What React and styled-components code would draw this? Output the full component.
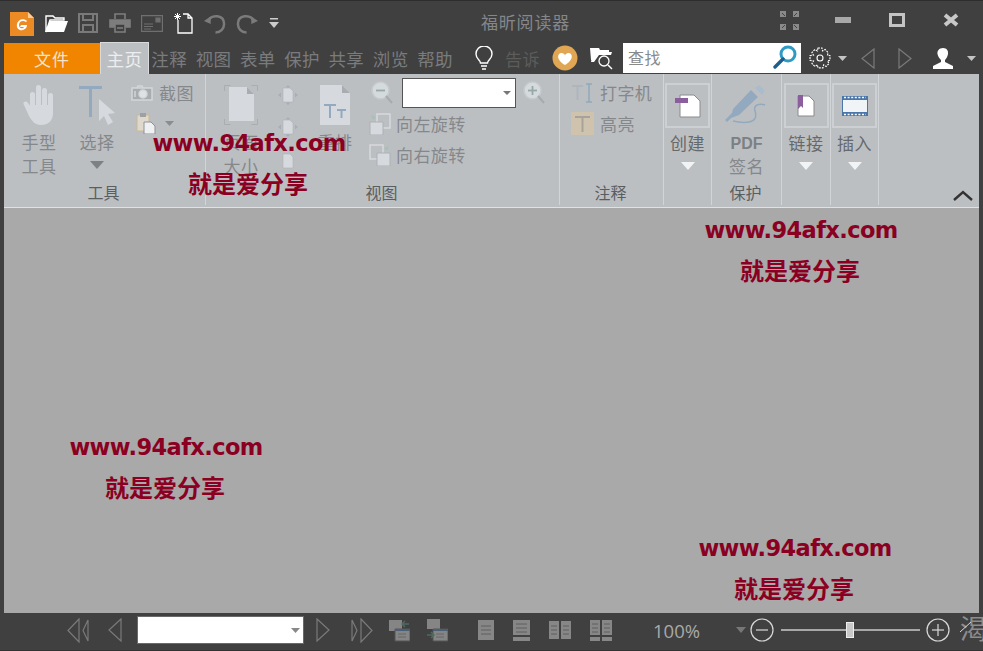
import React from 'react';
import styled, { createGlobalStyle } from 'styled-components';

// --- palette ---
const colors = {
  chrome: '#404040',
  ribbon: '#bcbfc2',
  canvas: '#a9a9a9',
  orange: '#f28500',
  disabled: '#85888b',
  label: '#5b5e61',
  tab: '#797b7d',
  sheet: '#d6dade',
  blue: '#92a9bf',
  water: '#8b0022',
};

const cjk = '"Liberation Sans", "Noto Sans CJK SC", sans-serif';

const GlobalStyle = createGlobalStyle`
  html, body { margin: 0; padding: 0; background: ${colors.chrome}; }
  * { box-sizing: border-box; }
`;

const Window = styled.div`
  position: relative;
  width: 983px;
  height: 651px;
  overflow: hidden;
  display: flex;
  flex-direction: column;
  background: ${colors.chrome};
  border-top: 1px solid #2e2e2e;
  font-family: ${cjk};
`;

// --- title bar ---
const TitleBar = styled.div`
  height: 41px;
  flex: none;
  display: flex;
  align-items: center;
  padding: 3px 0 0 10px;
`;
const QuickTools = styled.div`
  width: 471px;
  flex: none;
  display: flex;
  align-items: center;
  gap: 10.6px;
`;
const Title = styled.div`
  width: 281px;
  flex: none;
  font-size: 17px;
  line-height: 24px;
  color: #85878a;
  letter-spacing: 0.8px;
  margin-top: 2px;
`;
const WinControls = styled.div`
  display: flex;
  flex: none;
  align-items: center;
  margin-top: -6px;
`;
const WinSlot = styled.div`
  width: 54px;
  display: flex;
  justify-content: center;
`;

// --- tab row ---
const TabRow = styled.div`
  height: 32px;
  flex: none;
  display: flex;
  align-items: stretch;
  padding: 0 4px;
`;
const FileTab = styled.div`
  width: 96px;
  flex: none;
  background: ${colors.orange};
  color: #f3e3cf;
  font-size: 17px;
  display: flex;
  align-items: center;
  justify-content: center;
  letter-spacing: 1px;
  margin-top: 1px;
`;
const HomeTab = styled.div`
  width: 49px;
  flex: none;
  background: ${colors.ribbon};
  border: 1px solid #d8dadc;
  border-bottom: none;
  color: #eceef0;
  font-size: 17.5px;
  display: flex;
  align-items: center;
  justify-content: center;
  letter-spacing: 0.5px;
`;
const TabList = styled.div`
  display: flex;
  flex: none;
  margin-left: -2px;
`;
const Tab = styled.div`
  width: 44.3px;
  flex: none;
  color: ${colors.tab};
  font-size: 17.5px;
  letter-spacing: 0.3px;
  display: flex;
  align-items: center;
  justify-content: center;
`;
const TellGroup = styled.div`
  display: flex;
  flex: none;
  align-items: center;
  margin-left: 18px;
  gap: 12px;
  width: 148px;
`;
const TellText = styled.span`
  color: #5c5c5c;
  font-size: 17px;
  letter-spacing: 0.5px;
`;
const SearchBox = styled.div`
  width: 178px;
  flex: none;
  height: 30px;
  margin-top: 1px;
  background: #fff;
  display: flex;
  align-items: center;
  justify-content: space-between;
  padding: 0 3px 3px 5px;
  color: #8a8a8a;
  font-size: 16px;
  letter-spacing: 0.5px;
`;
const TabTools = styled.div`
  display: flex;
  align-items: center;
  margin-left: 8px;
  flex: 1;
`;
const Spaced = styled.div`
  display: flex;
  flex: none;
  align-items: center;
  gap: ${(p) => p.$gap || 0}px;
  margin-left: ${(p) => p.$ml || 0}px;
`;

// --- ribbon ---
const Ribbon = styled.div`
  height: 134px;
  flex: none;
  margin: 0 4px;
  display: flex;
  position: relative;
  background: ${colors.ribbon};
  border-bottom: 1px solid #dfe1e3;
`;
const Group = styled.div`
  width: ${(p) => p.$w}px;
  flex: none;
  height: 131px;
  display: flex;
  flex-direction: column;
  border-right: 1px solid #d2d5d8;
`;
const GroupBody = styled.div`
  flex: 1;
  display: flex;
  padding-left: ${(p) => p.$pad || 0}px;
  gap: ${(p) => p.$gap || 0}px;
`;
const GroupLabel = styled.div`
  height: 23px;
  flex: none;
  padding-right: 2px;
  font-size: 16px;
  line-height: 23px;
  text-align: center;
  color: ${colors.label};
`;
const BigTool = styled.div`
  width: ${(p) => p.$w || 50}px;
  flex: none;
  display: flex;
  flex-direction: column;
  align-items: center;
  margin-left: ${(p) => p.$ml || 0}px;
  padding-top: ${(p) => (p.$boxed ? 9 : 11)}px;
`;
const IconSlot = styled.div`
  height: 40px;
  margin-bottom: 7px;
  display: flex;
  justify-content: center;
`;
const IconBox = styled.div`
  width: 45px;
  height: 45px;
  margin-bottom: 5px;
  border: 2px solid #cdd0d3;
  display: flex;
  align-items: center;
  justify-content: center;
`;
const BigLabel = styled.div`
  font-size: 17px;
  line-height: 24px;
  letter-spacing: 0.4px;
  color: ${(p) => (p.$dark ? '#66696c' : colors.disabled)};
`;
const LatinLabel = styled(BigLabel)`
  font-size: 16px;
  font-weight: 700;
  letter-spacing: 0;
  color: #7d8083;
`;
const ArrowSlot = styled.div`
  margin-top: 5px;
  line-height: 0;
`;
const SmallCol = styled.div`
  display: flex;
  flex-direction: column;
  padding-top: 3px;
  margin-left: ${(p) => p.$ml || 0}px;
`;
const SmallRow = styled.div`
  height: 31px;
  display: flex;
  align-items: center;
  gap: ${(p) => p.$gap ?? 6}px;
  font-size: 17px;
  letter-spacing: 0.4px;
  color: ${colors.disabled};
`;
const IconStack = styled.div`
  width: 22px;
  flex: none;
  margin-left: ${(p) => p.$ml}px;
  padding-top: 11px;
  display: flex;
  flex-direction: column;
  gap: 12px;
  > :last-child { margin-top: 2px; }
`;
const ZoomInput = styled.div`
  width: 114px;
  height: 30px;
  margin: 0 7px 0 9px;
  background: #fff;
  border: 1px solid #555;
  display: flex;
  align-items: center;
  justify-content: flex-end;
  padding-right: 4px;
`;
const Collapse = styled.div`
  position: absolute;
  right: 6px;
  bottom: 5px;
  line-height: 0;
`;

// --- document area ---
const Canvas = styled.div`
  flex: 1;
  margin: 0 4px;
  background: ${colors.canvas};
`;
const Watermark = styled.div`
  position: absolute;
  left: ${(p) => p.$x}px;
  top: ${(p) => p.$y}px;
  width: 200px;
  text-align: center;
  color: ${colors.water};
  font-weight: 700;
  font-family: "DejaVu Sans", "Noto Sans CJK SC", sans-serif;
  pointer-events: none;
`;
const WaterUrl = styled.div`
  font-size: 22.5px;
  line-height: 30px;
  letter-spacing: -0.6px;
`;
const WaterText = styled.div`
  font-size: 24px;
  line-height: 30px;
  margin-top: 12px;
  margin-left: -2px;
`;

// --- status bar ---
const StatusBar = styled.div`
  height: 38px;
  flex: none;
  display: flex;
  align-items: center;
  padding: 0 0 3px 67px;
  border-bottom: 1px solid #333;
`;
const PageBox = styled.div`
  width: 167px;
  flex: none;
  height: 28px;
  background: #fff;
  border: 1px solid #6a6a6a;
  margin: 0 12px 0 15px;
  display: flex;
  align-items: center;
  justify-content: flex-end;
  padding-right: 3px;
`;
const ZoomText = styled.div`
  width: 83px;
  flex: none;
  margin-left: 41px;
  color: #a9a9a9;
  font-size: 18.5px;
  font-family: "Open Sans", "Liberation Sans", sans-serif;
`;
const Slider = styled.div`
  position: relative;
  width: 139px;
  flex: none;
  height: 2px;
  margin: 0 6px 0 7px;
  background: #a8a8a8;
`;
const SliderThumb = styled.div`
  position: absolute;
  left: 65px;
  top: -7px;
  width: 8px;
  height: 16px;
  background: #c8c8c8;
  border: 1px solid #eee;
`;
const CutChar = styled.div`
  position: relative;
  flex: none;
  margin-left: 10px;
  color: #8d8d8d;
  font-size: 27px;
  line-height: 30px;
  white-space: nowrap;
`;
const GripLine = styled.svg`
  position: absolute;
  left: 0;
  top: 6px;
`;

// --- icons ---
const Caret = ({ w = 10, h = 5, c = '#b5b5b5' }) => (
  <svg width={w} height={h} viewBox="0 0 10 5" preserveAspectRatio="none"><path d="M0 0h10L5 5z" fill={c} /></svg>
);

const Logo = () => (
  <svg width="24" height="25" viewBox="0 0 24 25">
    <path d="M0 1h18l6 6v18H0z" fill="#ec8a24" />
    <path d="M18 1l6 6h-6z" fill="#f7cf9f" />
    <path d="M17 10c-3-3-9-2-10 3s3 7 6 6 4-3 4-5h-6l-1 2h4c-1 2-5 2-5-2s4-5 7-3z" fill="#fff" />
  </svg>
);
const OpenFolder = () => (
  <svg width="23" height="19" viewBox="0 0 23 19">
    <path d="M1 18V2h7l2 2h9v2H5z" fill="none" stroke="#fff" strokeWidth="1.4" />
    <path d="M0 18L5 7h18l-4 11z" fill="#fff" />
  </svg>
);
const Save = () => (
  <svg width="20" height="20" viewBox="0 0 20 20" fill="none" stroke="#7a7a7a" strokeWidth="2">
    <path d="M1 1h18v18H1z" />
    <path d="M5 1v6h10V1M5 19v-7h10v7" />
  </svg>
);
const Printer = () => (
  <svg width="22" height="20" viewBox="0 0 22 20" fill="none" stroke="#7d7d7d" strokeWidth="1.6">
    <path d="M6 6V1h10v5" />
    <path d="M5 14H1V7h20v7h-4" fill="#7d7d7d" />
    <path d="M6 11h10v8H6z" fill={colors.chrome} />
    <path d="M8 15h6" />
  </svg>
);
const Mail = () => (
  <svg width="22" height="17" viewBox="0 0 22 17" fill="none" stroke="#6f6f6f" strokeWidth="1.2">
    <path d="M.6.6h20.8v15.8H.6z" />
    <path d="M3 9h9M3 11.5h9M3 14h7" />
    <path d="M15 3h4v4h-4z" fill="#6f6f6f" />
  </svg>
);
const NewDoc = () => (
  <svg width="19" height="22" viewBox="0 0 19 22" fill="none" stroke="#fff" strokeWidth="1.3">
    <path d="M4 8v13h14V6l-4-4H9M14 2v4h4" />
    <path d="M3.5 1v7M0 4.5h7M1 2l5 5M6 2L1 7" strokeWidth="1" />
  </svg>
);
const Undo = ({ flip }) => (
  <svg width="22" height="21" viewBox="0 0 23 21" fill="none" stroke="#7b7b7b" strokeWidth="2.6" style={flip ? { transform: 'scaleX(-1)' } : undefined}>
    <path d="M5 7c3-6 16-6 16 4 0 5-4 9-9 9" />
    <path d="M0 8l7-5v8z" fill="#7b7b7b" stroke="none" />
  </svg>
);
const QuickCaret = () => (
  <svg width="10" height="12" viewBox="0 0 10 12">
    <path d="M1 1h8v1.5H1z" fill="#ccc" /><path d="M0 5h10L5 11z" fill="#ccc" />
  </svg>
);
const FullScreen = () => (
  <svg width="19" height="19" viewBox="0 0 19 19" fill="#8a8a8a">
    <path d="M0 0h6v6H0zM13 0h6v6h-6zM0 13h6v6H0zM13 13h6v6h-6z" />
    <path d="M2 2l3 3M17 2l-3 3M2 17l3-3M17 17l-3-3" stroke="#444" />
  </svg>
);
const Minimize = () => <svg width="16" height="6" viewBox="0 0 16 6"><path d="M0 0h16v6H0z" fill="#a8a8a8" /></svg>;
const Maximize = () => (
  <svg width="16" height="14" viewBox="0 0 16 14"><path d="M1.5 1.5h13v11h-13z" fill="none" stroke="#c4c4c4" strokeWidth="3" /></svg>
);
const CloseX = () => (
  <svg width="16" height="14" viewBox="0 0 16 14"><path d="M2 2l12 10M14 2L2 12" stroke="#c8c8c8" strokeWidth="4" /></svg>
);
const Bulb = () => (
  <svg width="18" height="24" viewBox="0 0 18 24" fill="none" stroke="#fff" strokeWidth="1.4">
    <path d="M5.5 17c0-3-4.500-4-4.500-9a8 8 0 0 1 16 0c0 5-4.500 6-4.500 9z" />
    <path d="M6 20h6M7 23h4" />
  </svg>
);
const HeartBadge = () => (
  <svg width="26" height="26" viewBox="0 0 26 26">
    <circle cx="13" cy="13" r="12.500" fill="#e0a654" />
    <path d="M13 20c-10-6-7-12-3.500-12 2 0 3.500 2 3.500 2s1.500-2 3.500-2c3.500 0 6.500 6-3.500 12z" fill="#fff" />
  </svg>
);
const FolderSearch = () => (
  <svg width="23" height="24" viewBox="0 0 23 24" fill="none">
    <path d="M0 2h9l1 2h9v2H5l-3 8-1 0z" fill="#fff" />
    <path d="M3 6h19l-1 3H9l-5 7H1z" fill="#fff" />
    <circle cx="14" cy="15" r="5" stroke="#fff" strokeWidth="1.3" fill={colors.chrome} />
    <path d="M18 19l4 4" stroke="#fff" strokeWidth="1.4" />
  </svg>
);
const Magnifier = () => (
  <svg width="25" height="24" viewBox="0 0 25 24" fill="none">
    <circle cx="15" cy="9" r="7" stroke="#2f9bc4" strokeWidth="3" />
    <path d="M10 14l-8 8" stroke="#1d5e8c" strokeWidth="3.400" strokeLinecap="round" />
  </svg>
);
const Gear = () => (
  <svg width="22" height="22" viewBox="0 0 22 22" fill="none" stroke="#fff" strokeWidth="1.1">
    <circle cx="11" cy="11" r="3" />
    <path d="M9 1h4l.6 3 2.500-1.500 3 3L18.500 8l2.500.7v4.600l-2.500.7 1.600 2.500-3 3-2.500-1.600-.6 3H9l-.6-3-2.500 1.600-3-3L4.500 14 1 13.300V8.700L4.500 8 2.900 5.500l3-3L8.400 4z" strokeDasharray="2 1" />
  </svg>
);
const Tri = ({ dir = 'left', w = 15, h = 22, c = '#7a7a7a' }) => (
  <svg width={w} height={h} viewBox={`0 0 ${w} ${h}`}>
    <path d={dir === 'left' ? `M${w - 1} 1L1 ${h / 2}L${w - 1} ${h - 1}z` : `M1 1L${w - 1} ${h / 2}L1 ${h - 1}z`} fill="none" stroke={c} strokeWidth="1.2" />
  </svg>
);
const DoubleTri = ({ dir }) => (
  <svg width="23" height="25" viewBox="0 0 23 25" fill="none" stroke="#7a7a7a" strokeWidth="1.2" style={dir === 'right' ? { transform: 'scaleX(-1)' } : undefined}>
    <path d="M12 1L1 12.500 12 24zM21 2L16 12.500 21 23z" />
  </svg>
);
const User = () => (
  <svg width="22" height="21" viewBox="0 0 22 21">
    <path d="M11 0c4 0 5.500 3 5 6s-2 5-3 6v2l8 4v3H1v-3l8-4v-2C8 11 6 9 5.500 6S7 0 11 0z" fill="#fff" />
  </svg>
);
const Hand = () => (
  <svg width="32" height="40" viewBox="0 0 32 40" fill={colors.sheet}>
    <rect x="7" y="7" width="5" height="22" rx="2.500" />
    <rect x="13" y="0" width="5" height="28" rx="2.500" />
    <rect x="19" y="3" width="5" height="26" rx="2.500" />
    <rect x="25" y="8" width="5" height="22" rx="2.500" />
    <path d="M7 20h23v8c0 8-5 12-12 12-6 0-9-4-12-9L1 20c-2-3 2-5 4-2l3 4z" />
  </svg>
);
const SelectIcon = () => (
  <svg width="37" height="40" viewBox="0 0 37 40">
    <path d="M0 1h23v3h-10v28h-3V4H0z" fill={colors.blue} />
    <path d="M20 14l16 14-7 1 5 8-5 3-4-9-5 5z" fill={colors.sheet} />
  </svg>
);
const Camera = () => (
  <svg width="22" height="16" viewBox="0 0 22 16" fill="none" stroke="#d3d6d9" strokeWidth="1.5">
    <path d="M1 3h20v12H1z" fill="#a9acaf" />
    <circle cx="12" cy="9" r="4" fill="#dfe2e4" />
    <path d="M4 6v6" />
    <path d="M6 3l1-2h4l1 2" />
  </svg>
);
const Paste = () => (
  <svg width="20" height="21" viewBox="0 0 20 21">
    <path d="M1 2h12v16H1z" fill="#dfd9cd" stroke="#cdb893" />
    <path d="M4 0h6v4H4z" fill="#9ea1a4" />
    <path d="M8 9h7l4 4v8H8z" fill="#eef0f1" stroke="#8f9295" />
  </svg>
);
const PageIcon = () => (
  <svg width="34" height="40" viewBox="0 0 34 40" fill="none">
    <path d="M.5 6V.5h6M27.500.5h6v5.500M.5 34v5.500h6M27.500 39.500h6V34" stroke="#a9adb0" />
    <path d="M5 2h18l7 7v27H5z" fill={colors.sheet} />
    <path d="M23 2l7 7h-7z" fill="#a9adb1" />
  </svg>
);
const MiniPage = ({ arrows }) => (
  <svg width="22" height="20" viewBox="0 0 22 20" fill="none">
    <path d="M6 3h7l3 3v11H6z" fill={colors.sheet} stroke="#aeb2b5" strokeWidth=".6" />
    {arrows && <path d="M1 10l3-2.500v5zM21 10l-3-2.500v5zM11 0L8.500 2.500h5zM11 20l-2.500-2.500h5z" fill="#a5b0b4" />}
  </svg>
);
const ReflowIcon = () => (
  <svg width="30" height="40" viewBox="0 0 30 40">
    <path d="M0 0h22l8 8v32H0z" fill={colors.sheet} />
    <path d="M22 0l8 8h-8z" fill="#a9adb1" />
    <path d="M4 19h12v2h-5v12H9V21H4zM17 24h9v2h-3.500v7h-2v-7H17z" fill={colors.blue} />
  </svg>
);
const ZoomGlass = ({ plus }) => (
  <svg width="22" height="23" viewBox="0 0 22 23" fill="none">
    <circle cx="9.500" cy="9.500" r="8.500" fill="#d5dbdd" stroke="#c5cacd" strokeWidth="1.500" />
    <path d="M5 9.500h9" stroke="#98a8a8" strokeWidth="1.800" />
    {plus && <path d="M9.500 5v9" stroke="#98a8a8" strokeWidth="1.800" />}
    <path d="M15 15l6 7" stroke="#a6abae" strokeWidth="2" />
  </svg>
);
const Rotate = ({ right }) => (
  <svg width="22" height="22" viewBox="0 0 22 22" style={right ? { transform: 'scaleX(-1)' } : undefined}>
    <path d="M8 1h13v14H8z" fill={colors.ribbon} stroke="#d6d9dc" strokeWidth="1.500" />
    <path d="M1 9h13v13H1z" fill={colors.sheet} stroke="#aeb1b4" />
    <path d="M2 2l5 2-3 3z" fill="#a7c0b4" />
  </svg>
);
const TypeIcon = () => (
  <svg width="22" height="20" viewBox="0 0 22 20" fill="none">
    <path d="M1 3h11M6.500 3v14" stroke="#aeb6bd" strokeWidth="2" />
    <path d="M15 1h6M18 1v18M15 19h6" stroke="#8ea9bd" strokeWidth="1.500" />
  </svg>
);
const HighlightIcon = () => (
  <svg width="23" height="23" viewBox="0 0 23 23">
    <path d="M0 0h23v23H0z" fill="#cfc3ad" />
    <path d="M4 4h15v2h-6.500v14h-2V6H4z" fill="#a8a39a" />
  </svg>
);
const CreateDoc = () => (
  <svg width="26" height="24" viewBox="0 0 26 24">
    <path d="M5 1h14l6 6v16H5z" fill="#fff" stroke="#8a8a8a" />
    <path d="M0 4h13v5H0z" fill="#8b5f9e" />
  </svg>
);
const Pen = () => (
  <svg width="44" height="40" viewBox="0 0 44 40" fill="none">
    <path d="M8 24L26 5l7 7-19 18-8 3z" fill={colors.blue} />
    <path d="M30 3l4-3 6 6-3 4z" fill="#a9bccd" />
    <path d="M1 36l7-7" stroke={colors.blue} strokeWidth="3" />
    <path d="M40 20c-6-2-12 0-10 6s0 10-6 11-12 0-16-1" stroke={colors.blue} strokeWidth="1.500" />
  </svg>
);
const LinkDoc = () => (
  <svg width="18" height="22" viewBox="0 0 18 22">
    <path d="M1 1h11l5 5v15H1z" fill="#fff" stroke="#8a8a8a" />
    <path d="M1 0h5v13l-2-2-3 3z" fill="#8b5f9e" />
  </svg>
);
const Film = () => (
  <svg width="26" height="20" viewBox="0 0 26 20">
    <path d="M0 0h26v20H0z" fill="#4a76a8" />
    <path d="M1 4h24v12H1z" fill="#f1f4f7" />
    <path d="M2 1.500h22M2 18.500h22" stroke="#fff" strokeWidth="1.500" strokeDasharray="2 1.600" />
  </svg>
);
const ChevronUp = () => (
  <svg width="20" height="12" viewBox="0 0 20 12"><path d="M1 10l9-8 9 8" fill="none" stroke="#333" strokeWidth="2.400" /></svg>
);
const LayerSwap = ({ flip }) => (
  <svg width="21" height="23" viewBox="0 0 21 23">
    <path d={flip ? 'M0 0h13v10H0z' : 'M0 1h13v11H0z'} fill="#858585" />
    <path d="M6 10h15v12H6z" fill="#858585" stroke="#555" />
    <path d="M6 10h15v2H6z" fill="#4a5f78" />
    <path d="M9 15h8M9 18h8" stroke="#666" />
    <path d={flip ? 'M0 16h6M4 13l3 3-3 3' : 'M20 5h-6M16 2l-3 3 3 3'} fill="none" stroke="#4e6a62" strokeWidth="1.400" />
  </svg>
);
const Lines = ({ x, y, w, n = 3 }) => (
  <path d={Array.from({ length: n }, (_, i) => `M${x} ${y + i * 4}h${w}`).join('')} stroke="#5e5e5e" />
);
const SinglePage = () => (
  <svg width="16" height="20" viewBox="0 0 16 20"><path d="M0 0h16v20H0z" fill="#878787" /><Lines x={3} y={6} w={10} /></svg>
);
const ScrollPage = () => (
  <svg width="17" height="21" viewBox="0 0 17 21"><path d="M0 0h17v15H0zM0 17h17v4H0z" fill="#878787" /><Lines x={3} y={4} w={11} /></svg>
);
const TwoPage = () => (
  <svg width="22" height="18" viewBox="0 0 22 18"><path d="M0 0h10v18H0zM12 0h10v18H12z" fill="#878787" /><Lines x={2} y={5} w={6} /><Lines x={14} y={5} w={6} /></svg>
);
const TwoScroll = () => (
  <svg width="22" height="21" viewBox="0 0 22 21"><path d="M0 0h10v15H0zM12 0h10v15H12zM0 17h10v4H0zM12 17h10v4H12z" fill="#878787" /><Lines x={2} y={4} w={6} /><Lines x={14} y={4} w={6} /></svg>
);
const CircleBtn = ({ plus }) => (
  <svg width="24" height="24" viewBox="0 0 24 24" fill="none" stroke="#d8d8d8" strokeWidth="1.200">
    <circle cx="12" cy="12" r="11" />
    <path d="M6 12h12" />
    {plus && <path d="M12 6v12" />}
  </svg>
);

const marks = [
  { x: 149, y: 127 },
  { x: 701, y: 214 },
  { x: 66, y: 431 },
  { x: 695, y: 532 },
];

const App = () => (
  <Window>
    <GlobalStyle />
    <TitleBar>
      <QuickTools>
        <Logo />
        <OpenFolder />
        <Save />
        <Printer />
        <Mail />
        <NewDoc />
        <Undo />
        <Undo flip />
        <QuickCaret />
      </QuickTools>
      <Title>福昕阅读器</Title>
      <WinControls>
        <WinSlot><FullScreen /></WinSlot>
        <WinSlot><Minimize /></WinSlot>
        <WinSlot><Maximize /></WinSlot>
        <WinSlot><CloseX /></WinSlot>
      </WinControls>
    </TitleBar>

    <TabRow>
      <FileTab>文件</FileTab>
      <HomeTab>主页</HomeTab>
      <TabList>
        {['注释', '视图', '表单', '保护', '共享', '浏览', '帮助'].map((t) => (
          <Tab key={t}>{t}</Tab>
        ))}
      </TabList>
      <TellGroup>
        <Bulb />
        <TellText>告诉</TellText>
        <HeartBadge />
        <FolderSearch />
      </TellGroup>
      <SearchBox>查找<Magnifier /></SearchBox>
      <TabTools>
        <Gear />
        <Spaced $ml={7}><Caret w={9} h={5} c="#c4c4c4" /></Spaced>
        <Spaced $gap={23} $ml={14}>
          <Tri dir="left" w={14} h={21} />
          <Tri dir="right" w={14} h={21} />
        </Spaced>
        <Spaced $ml={20}><User /></Spaced>
        <Spaced $ml={13}><Caret w={9} h={5} c="#c4c4c4" /></Spaced>
      </TabTools>
    </TabRow>

    <Ribbon>
      <Group $w={202}>
        <GroupBody $pad={10} $gap={8}>
          <BigTool>
            <IconSlot><Hand /></IconSlot>
            <BigLabel>手型</BigLabel>
            <BigLabel>工具</BigLabel>
          </BigTool>
          <BigTool>
            <IconSlot><SelectIcon /></IconSlot>
            <BigLabel>选择</BigLabel>
            <ArrowSlot><Caret w={14} h={8} c="#7e8184" /></ArrowSlot>
          </BigTool>
          <SmallCol $ml={1}>
            <SmallRow><Camera />截图</SmallRow>
            <SmallRow $gap={9}>
              <Spaced $ml={5}><Paste /></Spaced>
              <Caret w={9} h={5} c="#8a8d90" />
            </SmallRow>
          </SmallCol>
        </GroupBody>
        <GroupLabel>工具</GroupLabel>
      </Group>

      <Group $w={354}>
        <GroupBody $pad={10}>
          <BigTool>
            <IconSlot><PageIcon /></IconSlot>
            <BigLabel>页面</BigLabel>
            <BigLabel>大小</BigLabel>
          </BigTool>
          <IconStack $ml={11}>
            <MiniPage arrows />
            <MiniPage arrows />
            <MiniPage />
          </IconStack>
          <BigTool $w={40} $ml={16}>
            <IconSlot><ReflowIcon /></IconSlot>
            <BigLabel>重排</BigLabel>
          </BigTool>
          <SmallCol $ml={14}>
            <SmallRow $gap={0}>
              <Spaced $ml={2}><ZoomGlass /></Spaced>
              <ZoomInput><Caret w={8} h={4} c="#777" /></ZoomInput>
              <ZoomGlass plus />
            </SmallRow>
            <SmallRow $gap={5}><Rotate />向左旋转</SmallRow>
            <SmallRow $gap={5}><Rotate right />向右旋转</SmallRow>
          </SmallCol>
        </GroupBody>
        <GroupLabel>视图</GroupLabel>
      </Group>

      <Group $w={104}>
        <GroupBody $pad={11}>
          <SmallCol>
            <SmallRow $gap={7}><TypeIcon />打字机</SmallRow>
            <SmallRow $gap={6}><HighlightIcon />高亮</SmallRow>
          </SmallCol>
        </GroupBody>
        <GroupLabel>注释</GroupLabel>
      </Group>

      <Group $w={48}>
        <GroupBody>
          <BigTool $w={47} $boxed>
            <IconBox><CreateDoc /></IconBox>
            <BigLabel $dark>创建</BigLabel>
            <ArrowSlot><Caret w={14} h={8} c="#f2f3f4" /></ArrowSlot>
          </BigTool>
        </GroupBody>
      </Group>

      <Group $w={70}>
        <GroupBody>
          <BigTool $w={69}>
            <IconSlot><Pen /></IconSlot>
            <LatinLabel>PDF</LatinLabel>
            <BigLabel>签名</BigLabel>
          </BigTool>
        </GroupBody>
        <GroupLabel>保护</GroupLabel>
      </Group>

      <Group $w={49}>
        <GroupBody>
          <BigTool $w={48} $boxed>
            <IconBox><LinkDoc /></IconBox>
            <BigLabel $dark>链接</BigLabel>
            <ArrowSlot><Caret w={14} h={8} c="#f2f3f4" /></ArrowSlot>
          </BigTool>
        </GroupBody>
      </Group>

      <Group $w={48}>
        <GroupBody>
          <BigTool $w={47} $boxed>
            <IconBox><Film /></IconBox>
            <BigLabel $dark>插入</BigLabel>
            <ArrowSlot><Caret w={14} h={8} c="#f2f3f4" /></ArrowSlot>
          </BigTool>
        </GroupBody>
      </Group>

      <Collapse><ChevronUp /></Collapse>
    </Ribbon>

    <Canvas />

    <StatusBar>
      <Spaced><DoubleTri /></Spaced>
      <Spaced $ml={18}><Tri dir="left" w={14} h={24} /></Spaced>
      <PageBox><Caret w={9} h={5} c="#888" /></PageBox>
      <Spaced><Tri dir="right" w={14} h={24} /></Spaced>
      <Spaced $ml={20}><DoubleTri dir="right" /></Spaced>
      <Spaced $gap={17} $ml={16}>
        <LayerSwap />
        <LayerSwap flip />
      </Spaced>
      <Spaced $gap={19} $ml={30}>
        <SinglePage />
        <ScrollPage />
        <TwoPage />
        <TwoScroll />
      </Spaced>
      <ZoomText>100%</ZoomText>
      <Spaced><Caret w={10} h={6} c="#777" /></Spaced>
      <Spaced $ml={4}>
        <CircleBtn />
        <Slider><SliderThumb /></Slider>
        <CircleBtn plus />
      </Spaced>
      <CutChar>
        渴
        <GripLine width="12" height="12" viewBox="0 0 12 12"><path d="M0 11l11-10" stroke="#d8d8d8" /></GripLine>
      </CutChar>
    </StatusBar>

    {marks.map((m) => (
      <Watermark key={`${m.x}-${m.y}`} $x={m.x} $y={m.y}>
        <WaterUrl>www.94afx.com</WaterUrl>
        <WaterText>就是爱分享</WaterText>
      </Watermark>
    ))}
  </Window>
);

export default App;
